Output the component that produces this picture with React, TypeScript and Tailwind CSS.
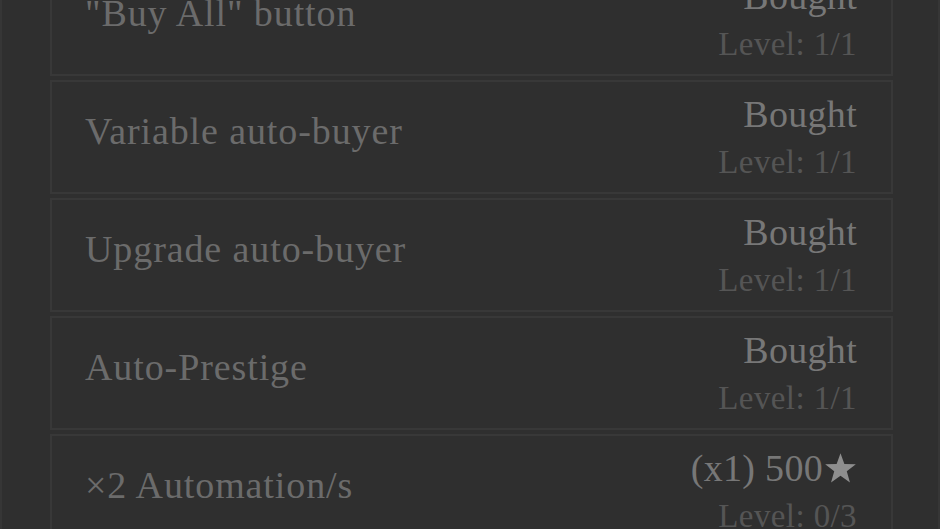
const upgrades = [
  { name: "\"Buy All\" button", cost: "Bought", level: "1/1" },
  { name: "Variable auto-buyer", cost: "Bought", level: "1/1" },
  { name: "Upgrade auto-buyer", cost: "Bought", level: "1/1" },
  { name: "Auto-Prestige", cost: "Bought", level: "1/1" },
  { name: "\u00d72 Automation/s", cost: "(x1) 500", star: true, level: "0/3" },
];

const Star = () => (
  <svg viewBox="0 0 24 24" className="inline-block w-[33px] h-[32px] align-[-3px] ml-[1px]">
    <polygon
      points="12,1 14.9,9 23.5,9.2 16.7,14.4 19.1,22.8 12,17.8 4.9,22.8 7.3,14.4 0.5,9.2 9.1,9"
      fill="#8e8e8e"
    />
  </svg>
);

const UpgradeRow = ({ name, cost, star, level }: { name: string; cost: string; star?: boolean; level: string }) => (
  <div className="h-[114px] border-2 border-[#383838] flex justify-between items-start pl-[33px] pr-[34px]">
    <div className="pt-[26px] text-[38px] leading-[46px] tracking-[0.9px] text-[#6b6b6b] whitespace-nowrap">{name}</div>
    <div className="pt-[9px] text-right">
      <div className="text-[38px] leading-[46px] tracking-[0.3px] text-[#777777] whitespace-nowrap">
        {cost}
        {star && <Star />}
      </div>
      <div className="text-[33px] leading-[50px] tracking-[0.4px] text-[#555555]">Level: {level}</div>
    </div>
  </div>
);

export default function App() {
  return (
    <div
      className="h-[529px] overflow-hidden bg-[#2f2f2f] border-x-2 border-[#363636]"
      style={{ fontFamily: '"Liberation Serif", "DejaVu Serif", serif' }}
    >
      <div className="ml-[48px] w-[843px] mt-[-38px] flex flex-col gap-[4px]">
        {upgrades.map((u) => (
          <UpgradeRow key={u.name} {...u} />
        ))}
      </div>
    </div>
  );
}
